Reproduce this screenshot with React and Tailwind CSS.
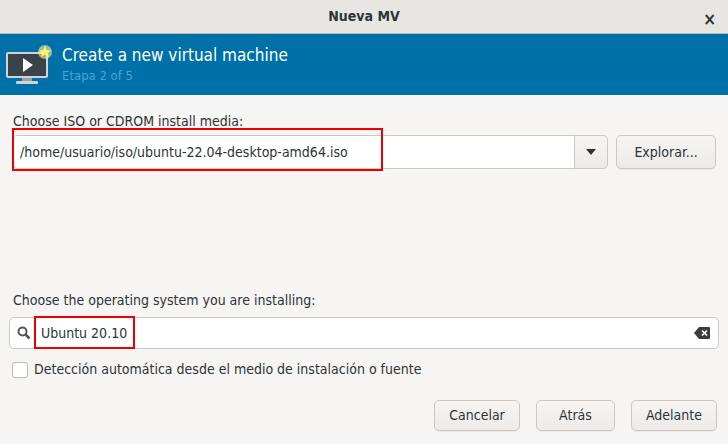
export default function App() {
  const f = { fontFamily: '"DejaVu Sans Condensed","DejaVu Sans",sans-serif', fontStretch: 'condensed' };
  const btn = "h-[31px] rounded-[5px] border border-[#cdc7c2] bg-gradient-to-b from-[#f6f5f4] to-[#edebe9] text-[14px] text-[#2e3436] flex items-center justify-center shadow-[0_1px_0_rgba(0,0,0,0.05)]";
  return (
    <div style={f} className="w-[728px] h-[444px] bg-[#f6f5f4] flex flex-col text-[#2e3436] overflow-hidden">
      <div className="h-[34px] bg-[#e8e6e3] border-b border-[#c0bdb8] flex items-center relative shrink-0">
        <div className="flex-1 text-center font-bold text-[14px] text-[#2e3436]">Nueva MV</div>
        <span className="absolute right-[12px] top-[7px] text-[17px] font-bold">×</span>
      </div>
      <div className="h-[61px] bg-[#0070a8] flex items-center shrink-0">
        <svg width="48" height="44" viewBox="0 0 48 44" className="ml-[5px] mr-[9px]">
          <rect x="1" y="9" width="42" height="26" rx="2" fill="#d0d4d6"/>
          <rect x="3" y="11" width="38" height="22" fill="#3a4348"/>
          <path d="M18 15 L28 22 L18 29 Z" fill="#fff"/>
          <rect x="17" y="35" width="10" height="3" fill="#9aa0a3"/>
          <rect x="11" y="38" width="22" height="3" rx="1" fill="#d0d4d6"/>
          <circle cx="40" cy="9" r="7" fill="#f8f3a0" opacity="0.6"/>
          <path d="M40 3 L41.8 7 L46 7.4 L42.8 10 L43.8 14 L40 11.8 L36.2 14 L37.2 10 L34 7.4 L38.2 7 Z" fill="#fff36a"/>
        </svg>
        <div className="flex flex-col">
          <div className="text-[17px] text-white leading-[22px]">Create a new virtual machine</div>
          <div className="text-[13px] text-[#4aa3d6] leading-[20px]">Etapa 2 of 5</div>
        </div>
      </div>
      <div className="flex-1 flex flex-col px-[12px]">
        <div className="text-[14px] mt-[16px] ml-[1px]">Choose ISO or CDROM install media:</div>
        <div className="flex items-center mt-[3px] gap-[8px]">
          <div className="flex w-[597px] h-[34px] relative">
            <div className="flex-1 bg-white border border-[#cdc7c2] rounded-l-[5px] flex items-center pl-[7px] text-[14px]">/home/usuario/iso/ubuntu-22.04-desktop-amd64.iso</div>
            <div className="w-[33px] border border-l-0 border-[#cdc7c2] rounded-r-[5px] bg-gradient-to-b from-[#f6f5f4] to-[#edebe9] flex items-center justify-center">
              <svg width="10" height="6" viewBox="0 0 10 6"><path d="M0 0 H10 L5 6 Z" fill="#2e3436"/></svg>
            </div>
            <div className="absolute left-0 top-[-7px] w-[371px] h-[43px] border-2 border-[#ee0000]"></div>
          </div>
          <div className={btn + " w-[100px] h-[34px]"}>Explorar...</div>
        </div>
        <div className="flex-1"></div>
        <div className="text-[14px] ml-[1px]">Choose the operating system you are installing:</div>
        <div className="relative mt-[6px] h-[32px] -mx-[3px] bg-white border border-[#cdc7c2] rounded-[5px] flex items-center">
          <svg width="14" height="14" viewBox="0 0 14 14" className="ml-[7px]"><circle cx="5.5" cy="5.5" r="4" stroke="#555" strokeWidth="2" fill="none"/><path d="M8.5 8.5 L12.5 12.5" stroke="#555" strokeWidth="2.5"/></svg>
          <span className="ml-[10px] text-[14px]">Ubuntu 20.10</span>
          <div className="flex-1"></div>
          <svg width="16" height="12" viewBox="0 0 16 12" className="mr-[8px]"><path d="M5 0 H15 a1 1 0 0 1 1 1 V11 a1 1 0 0 1 -1 1 H5 L0 6 Z" fill="#3d3d3d"/><path d="M8 3.5 L13 8.5 M13 3.5 L8 8.5" stroke="#fff" strokeWidth="1.6"/></svg>
          <div className="absolute left-[24px] top-[-2px] w-[101px] h-[33px] border-2 border-[#ee0000]"></div>
        </div>
        <div className="flex items-center mt-[10px] gap-[6px]">
          <div className="w-[16px] h-[16px] bg-white border border-[#bfb8b1] rounded-[3px]"></div>
          <span className="text-[14px]">Detección automática desde el medio de instalación o fuente</span>
        </div>
        <div className="flex justify-end gap-[16px] mt-[20px] mb-[13px] -mr-[1px]">
          <div className={btn + " w-[86px]"}>Cancelar</div>
          <div className={btn + " w-[79px]"}>Atrás</div>
          <div className={btn + " w-[86px]"}>Adelante</div>
        </div>
      </div>
    </div>
  );
}
